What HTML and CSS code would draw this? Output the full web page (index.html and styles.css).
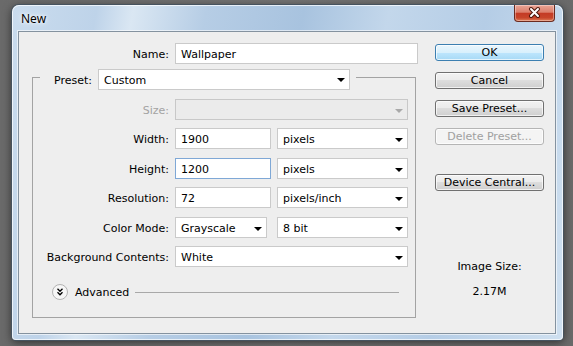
FILE: index.html
```html
<!DOCTYPE html>
<html lang="en">

    <head>

        <meta charset="UTF-8">
        <meta name="viewport" content="width=device-width, initial-scale=1.0">

        <title>New</title>

        <link rel="stylesheet" href="styles.css">

    </head>

    <body>

        <div class="window">

            <div class="titlebar">
                <span class="title">New</span>
                <div class="close">
                    <svg width="39" height="15" viewBox="0 0 39 15">
                        <path d="M16 4 L23 11 M23 4 L16 11" stroke="#4a160c" stroke-width="4" stroke-linecap="round" fill="none"/>
                        <path d="M16 4 L23 11 M23 4 L16 11" stroke="#fff" stroke-width="2" stroke-linecap="round" fill="none"/>
                    </svg>
                </div>
            </div>

            <div class="client">

                <div class="form">

                    <div class="row name-row">
                        <label>Name:</label>
                        <div class="field w-name">Wallpaper</div>
                    </div>

                    <fieldset class="preset">

                        <legend>
                            <div class="legend-inner">
                                <span>Preset:</span>
                                <div class="field select w-preset">Custom<span class="arrow"></span></div>
                            </div>
                        </legend>

                        <div class="rows">

                            <div class="row">
                                <label class="disabled">Size:</label>
                                <div class="field select disabled w-full"><span></span><span class="arrow"></span></div>
                            </div>

                            <div class="row">
                                <label>Width:</label>
                                <div class="field w-num">1900</div>
                                <div class="field select w-unit">pixels<span class="arrow"></span></div>
                            </div>

                            <div class="row">
                                <label>Height:</label>
                                <div class="field focused w-num">1200</div>
                                <div class="field select w-unit">pixels<span class="arrow"></span></div>
                            </div>

                            <div class="row">
                                <label>Resolution:</label>
                                <div class="field w-num">72</div>
                                <div class="field select w-unit">pixels/inch<span class="arrow"></span></div>
                            </div>

                            <div class="row">
                                <label>Color Mode:</label>
                                <div class="field select w-mode">Grayscale<span class="arrow"></span></div>
                                <div class="field select w-unit">8 bit<span class="arrow"></span></div>
                            </div>

                            <div class="row">
                                <label>Background Contents:</label>
                                <div class="field select w-full">White<span class="arrow"></span></div>
                            </div>

                        </div>

                        <div class="advanced">
                            <svg class="adv-icon" width="16" height="16" viewBox="0 0 16 16">
                                <circle cx="8" cy="8" r="7.5" fill="#f6f6f6" stroke="#b3b3b3"/>
                                <path d="M5.5 4.8 L8 7.3 L10.5 4.8 M5.5 8.3 L8 10.8 L10.5 8.3" fill="none" stroke="#000" stroke-width="1.3"/>
                            </svg>
                            <span class="adv-text">Advanced</span>
                            <span class="adv-line"></span>
                        </div>

                    </fieldset>

                </div>

                <div class="side">
                    <div class="btn default">OK</div>
                    <div class="btn">Cancel</div>
                    <div class="btn">Save Preset...</div>
                    <div class="btn disabled">Delete Preset...</div>
                    <div class="btn device">Device Central...</div>
                    <p class="image-size">Image Size:</p>
                    <p class="size-value">2.17M</p>
                </div>

            </div>

        </div>

    </body>

</html>
```

FILE: styles.css
```css
html, body {
    margin: 0;
    height: 100%;
    overflow: hidden;
}

body {
    box-sizing: border-box;
    padding: 5px 0 0 12px;
    background: linear-gradient(to right, #6a6a6a, #747474 50%, #6a6a6a);
    font-family: "DejaVu Sans", Tahoma, sans-serif;
    font-size: 11px;
    color: #000;
}

.window {
    box-sizing: border-box;
    width: 551px;
    height: 335px;
    padding: 0 7px 6px 6px;
    display: flex;
    flex-direction: column;
    border-radius: 7px 7px 4px 4px;
    background: linear-gradient(100deg, #cadcee 0%, #bed3e9 14%, #dae7f3 20%, #b6cde5 32%, #a8c3df 48%, #c3d7eb 62%, #b5cde6 78%, #cfe0f0 100%);
    box-shadow: inset 0 0 0 1px rgba(255, 255, 255, 0.7), 0 0 0 1px #46535f, 0 2px 10px rgba(0, 0, 0, 0.6);
}

.titlebar {
    height: 26px;
    display: flex;
    justify-content: space-between;
    align-items: flex-start;
}

.title {
    margin: 7px 0 0 3px;
    font-family: "Noto Sans", "Open Sans", sans-serif;
    font-size: 12px;
    line-height: 14px;
    text-shadow: 0 0 6px #fff, 0 0 3px #fff;
}

.close {
    width: 41px;
    height: 17px;
    box-sizing: border-box;
    margin-right: 1px;
    border: 1px solid #6b2b20;
    border-top: none;
    border-radius: 0 0 4px 4px;
    background: linear-gradient(#e9a596 0%, #dc7f6c 45%, #c43b25 52%, #c7452a 80%, #e0805a 100%);
    box-shadow: inset 0 0 0 1px rgba(255, 255, 255, 0.35);
}

.close svg {
    display: block;
}

.client {
    flex: 1;
    display: flex;
    padding: 11px 0 0 13px;
    background: #eeeeee;
    border: 1px solid #84929f;
    box-shadow: 0 0 0 1px rgba(255, 255, 255, 0.6);
}

.form {
    width: 386px;
}

.row {
    display: flex;
    align-items: center;
    gap: 6px;
    height: 21px;
}

.row label {
    flex: none;
    padding-top: 2px;
    text-align: right;
}

.legend-inner span {
    padding-top: 2px;
}

.name-row label {
    width: 137px;
}

.rows label {
    width: 136px;
}

label.disabled {
    color: #a3a3a3;
}

.field {
    box-sizing: border-box;
    flex: none;
    height: 21px;
    padding: 2px 4px 0 5px;
    display: flex;
    align-items: center;
    justify-content: space-between;
    background: #fff;
    border: 1px solid #cacaca;
    white-space: nowrap;
}

.field.focused {
    border-color: #7fa8d6;
}

.field.disabled {
    background: #ebebeb;
    border-color: #c8c8c8;
}

.arrow {
    width: 0;
    height: 0;
    margin-top: 1px;
    border-left: 4px solid transparent;
    border-right: 4px solid transparent;
    border-top: 4px solid #000;
}

.disabled .arrow {
    border-top-color: #a9a9a9;
}

.w-name {
    width: 243px;
}

.w-preset {
    width: 252px;
}

.w-full {
    width: 233px;
}

.w-num {
    width: 96px;
}

.w-unit {
    width: 131px;
}

.w-mode {
    width: 92px;
    margin-right: 4px;
}

.preset {
    box-sizing: border-box;
    width: 384px;
    min-width: 0;
    margin: 5px 0 0;
    padding: 0 0 16px;
    border: 1px solid #a3a3a3;
}

.preset legend {
    height: 17px;
    margin-left: 7px;
    padding: 0 6px 0 14px;
}

.legend-inner {
    height: 21px;
    display: flex;
    align-items: center;
    gap: 6px;
}

.rows {
    padding-top: 13px;
    display: flex;
    flex-direction: column;
    gap: 8.4px;
}

.advanced {
    height: 17px;
    margin-top: 17px;
    padding: 0 16px 0 19px;
    display: flex;
    align-items: center;
}

.adv-icon {
    flex: none;
}

.adv-text {
    margin-left: 7px;
    padding-top: 1px;
}

.adv-line {
    flex: 1;
    height: 1px;
    margin-left: 6px;
    background: #a8a8a8;
}

.side {
    width: 109px;
    margin-left: 17px;
    padding-top: 1px;
    display: flex;
    flex-direction: column;
}

.btn {
    box-sizing: border-box;
    height: 17px;
    line-height: 15px;
    text-align: center;
    border: 1px solid #707070;
    border-radius: 3px;
    background: linear-gradient(#f2f2f2 0%, #ebebeb 50%, #dddddd 50%, #cfcfcf 100%);
    box-shadow: inset 0 0 0 1px rgba(255, 255, 255, 0.7);
}

.btn + .btn {
    margin-top: 11px;
}

.btn.default {
    border-color: #3c7fb1;
    background: linear-gradient(#eaf6fd 0%, #d9f0fc 50%, #bee6fd 50%, #a7d9f5 100%);
}

.btn.disabled {
    color: #a0a0a0;
    border-color: #b5b5b5;
    background: #f4f4f4;
}

.btn.device {
    margin-top: 29px;
}

.image-size {
    margin: 69px 0 0;
    line-height: 13px;
    text-align: center;
}

.size-value {
    margin: 12px 0 0;
    line-height: 13px;
    text-align: center;
}
```
